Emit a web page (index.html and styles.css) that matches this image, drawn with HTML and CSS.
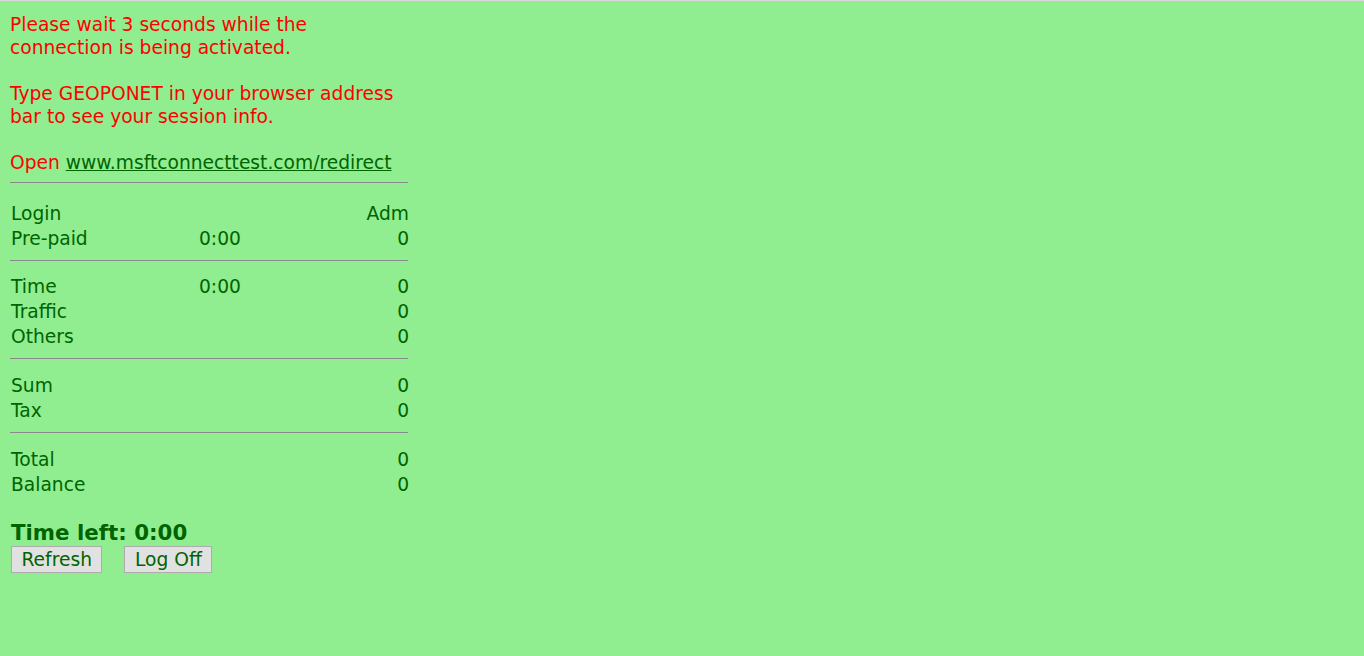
FILE: index.html
```html
<!DOCTYPE html>
<html>
<head>
<meta charset="utf-8">
<title>Session</title>
<link rel="stylesheet" href="styles.css">
</head>
<body>
<div class="page">
  <div class="panel">
    <p class="notice">Please wait 3 seconds while the connection is being activated.<br><br>Type GEOPONET in your browser address bar to see your session info.<br><br>Open <a href="#" class="link">www.msftconnecttest.com/redirect</a></p>
    <hr class="rule rule-first">
    <div class="rows rows-first">
      <span>Login</span><span></span><span class="num">Adm</span>
      <span>Pre-paid</span><span>0:00</span><span class="num">0</span>
    </div>
    <hr class="rule">
    <div class="rows">
      <span>Time</span><span>0:00</span><span class="num">0</span>
      <span>Traffic</span><span></span><span class="num">0</span>
      <span>Others</span><span></span><span class="num">0</span>
    </div>
    <hr class="rule">
    <div class="rows rows-wide">
      <span>Sum</span><span></span><span class="num">0</span>
      <span>Tax</span><span></span><span class="num">0</span>
    </div>
    <hr class="rule">
    <div class="rows rows-wide">
      <span>Total</span><span></span><span class="num">0</span>
      <span>Balance</span><span></span><span class="num">0</span>
    </div>
    <div class="timeleft">Time left: 0:00</div>
    <div class="buttons">
      <button class="btn">Refresh</button>
      <button class="btn">Log Off</button>
    </div>
  </div>
</div>
</body>
</html>
```
FILE: styles.css
```css
html, body {
  margin: 0;
  padding: 0;
  background: #90ee90;
}
body {
  font-family: "DejaVu Sans", Verdana, sans-serif;
  font-size: 18.67px;
  line-height: 23px;
  color: #006400;
  min-height: 656px;
  box-sizing: border-box;
  border-top: 1px solid #d9d9d9;
}
.page {
  padding: 12px 0 0 10px;
}
.panel {
  width: 400px;
}
.notice {
  margin: 0;
  color: #ff0000;
}
.link {
  color: #006400;
  text-decoration: underline;
}
.rule {
  margin: 9px 0 0 0;
  height: 0;
  border: 0;
  border-top: 1px solid #8a8a8a;
  border-bottom: 1px solid #c9c9c9;
  width: 398px;
}
.rule-first {
  margin-top: 8px;
}
.rows {
  display: grid;
  grid-template-columns: 188px 1fr auto;
  margin-top: 12px;
  padding: 0 1px;
}
.rows > span {
  padding: 1px 0;
  min-height: 23px;
}
.rows-first {
  margin-top: 17px;
}
.rows-wide {
  margin-top: 13px;
}
.num {
  text-align: right;
}
.timeleft {
  font-weight: bold;
  font-size: 21.33px;
  line-height: 25px;
  margin-top: 23px;
  padding-left: 1px;
  color: #006400;
}
.buttons {
  display: flex;
  gap: 22px;
  margin-top: 1px;
  padding-left: 1px;
}
.btn {
  font-family: "DejaVu Sans", Verdana, sans-serif;
  font-size: 18.67px;
  line-height: 21px;
  color: #006400;
  background: #e1e1e1;
  border: 1px solid #adadad;
  padding: 2px 9.5px;
  height: 27px;
  border-radius: 0;
}
```
